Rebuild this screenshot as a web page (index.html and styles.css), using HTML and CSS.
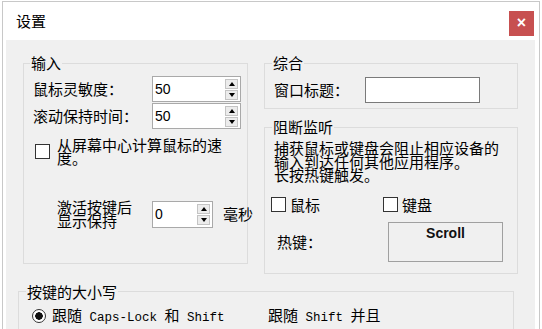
FILE: index.html
```html
<!DOCTYPE html>
<html lang="zh">
<head>
<meta charset="utf-8">
<title>设置</title>
<link rel="stylesheet" href="styles.css">
</head>
<body>
<div class="window">
  <div class="titlebar">
    <span class="title">设置</span>
    <span class="close">×</span>
  </div>
  <div class="content">
    <div class="top">
      <fieldset class="group g-input">
        <legend>输入</legend>
        <div class="gb gb-input">
          <div class="row">
            <span class="lbl">鼠标灵敏度：</span>
            <div class="spin w89"><span class="val">50</span><span class="spin-btns"><span class="sb up"></span><span class="sb down"></span></span></div>
          </div>
          <div class="row row2">
            <span class="lbl">滚动保持时间：</span>
            <div class="spin w89"><span class="val">50</span><span class="spin-btns"><span class="sb up"></span><span class="sb down"></span></span></div>
          </div>
          <div class="check-row">
            <span class="box"></span>
            <span class="check-text">从屏幕中心计算鼠标的速度。</span>
          </div>
          <div class="hold-row">
            <span class="hold-lbl">激活按键后<br>显示保持</span>
            <div class="spin w61"><span class="val">0</span><span class="spin-btns"><span class="sb up"></span><span class="sb down"></span></span></div>
            <span class="unit">毫秒</span>
          </div>
        </div>
      </fieldset>
      <div class="right">
        <fieldset class="group g-general">
          <legend>综合</legend>
          <div class="gb gb-general">
            <div class="row">
              <span class="lbl lbl-title">窗口标题：</span>
              <span class="textbox"></span>
            </div>
          </div>
        </fieldset>
        <fieldset class="group g-block">
          <legend>阻断监听</legend>
          <div class="gb gb-block">
            <p class="desc">捕获鼠标或键盘会阻止相应设备的<br>输入到达任何其他应用程序。<br>长按热键触发。</p>
            <div class="checks">
              <span class="chk chk-mouse"><span class="box"></span>鼠标</span>
              <span class="chk"><span class="box"></span>键盘</span>
            </div>
            <div class="hotkey-row">
              <span class="hk-lbl">热键：</span>
              <span class="hotkey">Scroll</span>
            </div>
          </div>
        </fieldset>
      </div>
    </div>
    <fieldset class="group g-case">
      <legend>按键的大小写</legend>
      <div class="gb gb-case">
        <div class="opt opt1"><span class="radio"></span><span class="opt-text">跟随<span class="mono"> Caps-Lock </span>和<span class="mono"> Shift</span></span></div>
        <div class="opt"><span class="opt-text">跟随<span class="mono"> Shift </span>并且</span></div>
      </div>
    </fieldset>
  </div>
</div>
</body>
</html>
```

FILE: styles.css
```css
html, body {
  margin: 0;
  padding: 0;
  background: #ffffff;
  height: 329px;
  overflow: hidden;
}

body {
  font-family: "Noto Sans CJK SC", "Liberation Sans", sans-serif;
  font-size: 15px;
  color: #000;
}

.window {
  margin: 1px 0 0 2px;
  width: 536px;
  height: 360px;
  border: 1px solid #c8c8c8;
  border-bottom: none;
  background: #fff;
}

.titlebar {
  height: 38px;
  display: flex;
  justify-content: space-between;
  align-items: flex-start;
  padding: 0 5px 0 13px;
}

.title {
  margin-top: 10px;
  line-height: 18px;
  font-size: 15px;
}

.close {
  margin-top: 9px;
  width: 25px;
  height: 25px;
  background: #c75050;
  color: #fff;
  font-family: "Liberation Sans", sans-serif;
  font-size: 16px;
  line-height: 24px;
  text-align: center;
  font-weight: bold;
}

.content {
  margin: 0 4px 0 3px;
  background: #f0f0f0;
  height: 320px;
  padding-top: 15px;
  box-sizing: border-box;
}

.top {
  display: grid;
  grid-template-columns: 225px 254px;
  column-gap: 16px;
  padding-left: 17px;
}

.group {
  margin: 0;
  padding: 0;
  min-width: 0;
  border: 1px solid #dcdcdc;
}

.group legend {
  margin-left: 7px;
  padding: 0 1px;
  line-height: 16px;
  font-size: 15px;
}

.g-input legend {
  margin-left: 6px;
}

.row {
  display: flex;
  align-items: center;
}

.g-input {
  height: 209px;
  box-sizing: border-box;
}

.gb-input {
  padding: 5px 0 0 9px;
}

.lbl {
  width: 119px;
  line-height: 18px;
  white-space: nowrap;
}

.row2 {
  margin-top: 1px;
}

.spin {
  display: flex;
  justify-content: space-between;
  align-items: center;
  height: 26px;
  box-sizing: border-box;
  border: 1px solid #a9a9a9;
  background: #fff;
  padding: 0 2px 0 2px;
  flex: none;
}

.w89 { width: 89px; }
.w61 { width: 61px; height: 27px; }

.val {
  font-family: "Liberation Sans", sans-serif;
  font-size: 14px;
  line-height: 16px;
}

.spin-btns {
  display: flex;
  flex-direction: column;
  gap: 1px;
}

.sb {
  display: block;
  width: 13px;
  height: 10px;
  box-sizing: border-box;
  border: 1px solid #c4c4c4;
  background: #ececec;
  position: relative;
}

.sb::after {
  content: "";
  position: absolute;
  left: 3px;
  width: 0;
  height: 0;
  border-left: 3px solid transparent;
  border-right: 3px solid transparent;
}

.sb.up::after {
  top: 2px;
  border-bottom: 4px solid #000;
}

.sb.down::after {
  top: 2px;
  border-top: 4px solid #000;
}

.check-row {
  display: flex;
  align-items: center;
  margin-top: 9px;
  padding-left: 2px;
}

.box {
  display: inline-block;
  width: 15px;
  height: 15px;
  box-sizing: border-box;
  border: 1px solid #333;
  background: #fff;
  flex: none;
}

.check-text {
  margin-left: 7px;
  width: 172px;
  line-height: 13px;
}

.hold-row {
  display: flex;
  align-items: center;
  margin-top: 36px;
  padding-left: 24px;
}

.hold-lbl {
  width: 95px;
  line-height: 14px;
  flex: none;
}

.unit {
  margin-left: 10px;
  line-height: 18px;
  white-space: nowrap;
}

.right {
  display: flex;
  flex-direction: column;
  gap: 10px;
}

.gb-general {
  padding: 6px 0 5px 9px;
}

.lbl-title {
  width: 91px;
}

.textbox {
  display: block;
  width: 115px;
  height: 26px;
  box-sizing: border-box;
  border: 1px solid #7a7a7a;
  background: #fff;
}

.gb-block {
  padding: 6px 0 11px 6px;
}

.desc {
  margin: 0 0 0 3px;
  line-height: 13.5px;
}

.checks {
  display: flex;
  margin-top: 14px;
  line-height: 18px;
}

.chk {
  display: flex;
  align-items: center;
  gap: 4px;
}

.chk-mouse {
  width: 112px;
}

.hotkey-row {
  display: flex;
  align-items: center;
  margin-top: 8px;
  padding-left: 6px;
}

.hk-lbl {
  width: 111px;
  line-height: 18px;
}

.hotkey {
  display: block;
  width: 115px;
  height: 40px;
  box-sizing: border-box;
  border: 1px solid #a0a0a0;
  background: #f0f0f0;
  text-align: center;
  font-family: "Liberation Sans", sans-serif;
  font-weight: bold;
  font-size: 14px;
  line-height: 18px;
  padding-top: 1px;
  color: #111;
}

.g-case {
  margin: 10px 0 0 12px;
  width: 496px;
  box-sizing: border-box;
}

.gb-case {
  display: flex;
  align-items: center;
  padding: 6px 0 6px 13px;
}

.opt {
  display: flex;
  align-items: center;
}

.opt1 {
  width: 236px;
}

.opt-text {
  line-height: 18px;
  white-space: pre;
}

.radio {
  display: inline-block;
  width: 14px;
  height: 14px;
  box-sizing: border-box;
  border: 1px solid #333;
  border-radius: 50%;
  background: radial-gradient(circle, #111 0 3.5px, #fff 4px);
  margin-right: 6px;
  flex: none;
}

.mono {
  font-family: "Liberation Mono", monospace;
  font-size: 12.5px;
}
```
